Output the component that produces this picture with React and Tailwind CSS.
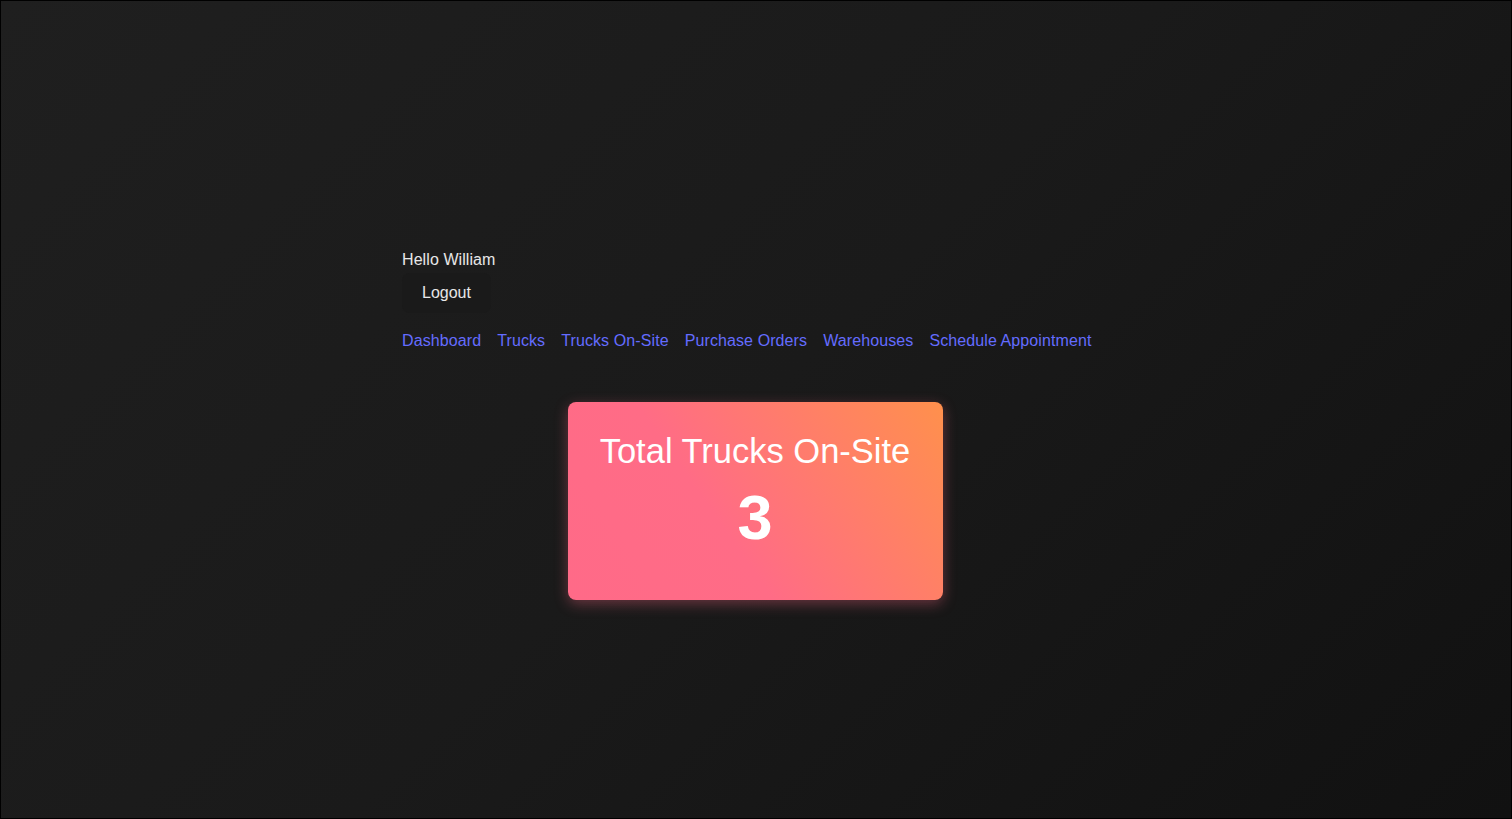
export default function App() {
  const links = ["Dashboard", "Trucks", "Trucks On-Site", "Purchase Orders", "Warehouses", "Schedule Appointment"];
  return (
    <div
      className="w-full h-[819px] border border-black bg-[linear-gradient(135deg,#1f1f1f_0%,#1a1a1a_50%,#111111_100%)] text-[16px] text-[rgba(255,255,255,0.87)] flex justify-center"
      style={{ fontFamily: '"Liberation Sans", Arial, sans-serif' }}
    >
      <div className="w-[708px] flex flex-col pt-[250px]">
        <div className="leading-[normal] text-white/90 tracking-[0.08px]">Hello William</div>
        <div className="mt-[4px]">
          <button className="bg-[#1a1a1a] rounded-[8px] border border-transparent px-[19px] py-[10px] leading-[normal] text-white/90">
            Logout
          </button>
        </div>
        <nav className="mt-[19px] flex gap-[16px] leading-[normal] tracking-[0.1px]">
          {links.map((l) => (
            <a key={l} href="#" className="text-[#646cff]">{l}</a>
          ))}
        </nav>
        <div className="mt-[52px] flex justify-center pr-[2px]">
          <div className="w-[375px] h-[198px] rounded-[8px] bg-[linear-gradient(55deg,#ff6a88_0%,#ff6c86_40%,#ff8a56_90%,#ff904c_100%)] shadow-[0_4px_14px_rgba(255,106,136,0.35)] flex flex-col items-center pt-[30px] text-white">
            <div className="text-[34.5px] leading-[normal]">Total Trucks On-Site</div>
            <div className="mt-[10px] text-[63px] font-bold leading-[normal]">3</div>
          </div>
        </div>
      </div>
    </div>
  );
}
